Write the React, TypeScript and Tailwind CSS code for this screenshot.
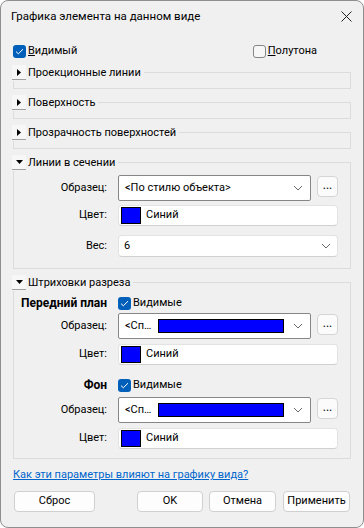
import React from "react";

const font = { fontFamily: 'Roboto, "Liberation Sans", Arial, sans-serif' };

function Check({ checked }: { checked: boolean }) {
  if (!checked) {
    return <span className="inline-block h-[13px] w-[13px] shrink-0 rounded-[3px] border border-[#858585] bg-[#f7f7f7]" />;
  }
  return (
    <span className="flex h-[13px] w-[13px] shrink-0 items-center justify-center rounded-[3px] bg-[#005fb8]">
      <svg width="9" height="7" viewBox="0 0 9 7" fill="none">
        <path d="M1 3.6 3.3 5.8 8 1.2" stroke="white" strokeWidth="1" />
      </svg>
    </span>
  );
}

function Toggle({ open }: { open: boolean }) {
  return (
    <span className="flex h-[15px] w-[14px] shrink-0 items-center justify-center border-b border-[#a0a0a0] bg-[#f7f7f7]">
      {open ? (
        <svg width="7" height="4" viewBox="0 0 7 4">
          <path d="M0 0h7L3.5 4z" fill="#000" />
        </svg>
      ) : (
        <svg width="4" height="7" viewBox="0 0 4 7">
          <path d="M0 0l4 3.5L0 7z" fill="#000" />
        </svg>
      )}
    </span>
  );
}

function Group({
  title,
  open,
  className,
  children,
}: {
  title: string;
  open?: boolean;
  className?: string;
  children?: React.ReactNode;
}) {
  return (
    <div className={`mx-[12px] border border-[#dcdcdc] ${className ?? ""}`}>
      <div className="-ml-[2px] -mt-[9px] flex h-[17px] w-fit items-center bg-[#f0f0f0] pr-[3px]">
        <Toggle open={!!open} />
        <span className="ml-[2px] leading-[15px]">{title}</span>
      </div>
      {children}
    </div>
  );
}

function Chevron() {
  return (
    <svg width="10" height="6" viewBox="0 0 10 6" fill="none" className="shrink-0">
      <path d="M1 1l4 4 4-4" stroke="#6b6b6b" strokeWidth="1" />
    </svg>
  );
}

function Dots() {
  return (
    <button className="ml-[6px] mt-[1px] flex h-[21px] w-[21px] shrink-0 items-center justify-center self-start rounded-[4px] border border-[#d5d5d5] bg-[#fbfbfb] pb-[4px] text-[12px] leading-none">
      ...
    </button>
  );
}

function Row({ label, bold, className, children }: { label: string; bold?: boolean; className?: string; children: React.ReactNode }) {
  return (
    <div className={`flex items-center ${className ?? ""}`}>
      <span className={`w-[93px] shrink-0 text-right ${bold ? "text-[12px] font-bold" : ""}`}>{label}</span>
      <div className="ml-[11px] mr-[12px] flex flex-1 items-center">{children}</div>
    </div>
  );
}

function ColorField() {
  return (
    <div className="flex h-[21px] flex-1 items-center rounded-[4px] border border-[#e3e3e3] border-b-[#d0d0d0] bg-white pl-[2px]">
      <span className="h-[17px] w-[20px] border border-black bg-[#0000ff]" />
      <span className="ml-[5px]">Синий</span>
    </div>
  );
}

function PatternSelect({ swatch }: { swatch?: boolean }) {
  return (
    <>
      <div className="flex h-[26px] flex-1 items-center rounded-[2px] border border-[#868686] bg-white pl-[6px] pr-[7px]">
        {swatch ? (
          <>
            <span>&lt;Сп…</span>
            <span className="ml-[7px] mr-[9px] h-[14px] flex-1 border border-black bg-[#0000ff]" />
          </>
        ) : (
          <span className="flex-1">&lt;По стилю объекта&gt;</span>
        )}
        <Chevron />
      </div>
      <Dots />
    </>
  );
}

export default function App() {
  return (
    <div className="h-[528px] w-[364px] bg-white text-[11px] text-black" style={font}>
      <div className="flex h-full flex-col overflow-hidden rounded-[8px] border border-[#8f8f8f] bg-[#f0f0f0]">
        <div className="flex h-[31px] shrink-0 items-center justify-between pl-[10px] pr-[11px]">
          <span className="text-[11.5px]">Графика элемента на данном виде</span>
          <svg width="11" height="11" viewBox="0 0 11 11" fill="none">
            <path d="M0.5 0.5l10 10M10.5 0.5l-10 10" stroke="#222" strokeWidth="1" />
          </svg>
        </div>

        <div className="mt-[12px] flex h-[14px] items-center justify-between pl-[12px] pr-[46px]">
          <label className="flex items-center gap-[2px]">
            <Check checked />
            <span>
              <span className="underline">В</span>идимый
            </span>
          </label>
          <label className="flex items-center gap-[2px]">
            <Check checked={false} />
            <span>
              <span className="underline">П</span>олутона
            </span>
          </label>
        </div>

        <Group title="Проекционные линии" className="mt-[14px] h-[17px]" />
        <Group title="Поверхность" className="mt-[13px] h-[17px]" />
        <Group title="Прозрачность поверхностей" className="mt-[13px] h-[17px]" />

        <Group title="Линии в сечении" open className="mt-[13px] h-[107px]">
          <Row label="Образец:" className="mt-[4px]">
            <PatternSelect />
          </Row>
          <Row label="Цвет:" className="mt-[4px]">
            <ColorField />
          </Row>
          <Row label="Вес:" className="mt-[9px]">
            <div className="flex h-[22px] flex-1 items-center rounded-[4px] border border-[#e3e3e3] border-b-[#d0d0d0] bg-white pl-[5px] pr-[6px]">
              <span className="flex-1">6</span>
              <Chevron />
            </div>
          </Row>
        </Group>

        <Group title="Штриховки разреза" open className="mt-[13px] h-[177px]">
          <Row label="Передний план" bold className="mt-[5px] h-[14px]">
            <label className="flex items-center gap-[2px]">
              <Check checked />
              <span>Видимые</span>
            </label>
          </Row>
          <Row label="Образец:" className="mt-[3px]">
            <PatternSelect swatch />
          </Row>
          <Row label="Цвет:" className="mt-[5px]">
            <ColorField />
          </Row>
          <Row label="Фон" bold className="mt-[13px] h-[14px]">
            <label className="flex items-center gap-[2px]">
              <Check checked />
              <span>Видимые</span>
            </label>
          </Row>
          <Row label="Образец:" className="mt-[5px]">
            <PatternSelect swatch />
          </Row>
          <Row label="Цвет:" className="mt-[5px]">
            <ColorField />
          </Row>
        </Group>

        <a href="#" className="ml-[12px] mt-[8px] h-[16px] w-fit leading-[16px] text-[#0066cc] underline">
          Как эти параметры влияют на графику вида?
        </a>

        <div className="mt-[8px] flex h-[21px] pl-[13px] pr-[13px]">
          <button className="h-[21px] w-[81px] rounded-[4px] border border-[#d0d0d0] bg-[#fdfdfd]">Сброс</button>
          <div className="flex-1" />
          <button className="h-[21px] w-[66px] rounded-[4px] border border-[#d0d0d0] bg-[#fdfdfd]">OK</button>
          <button className="ml-[6px] h-[21px] w-[67px] rounded-[4px] border border-[#d0d0d0] bg-[#fdfdfd]">Отмена</button>
          <button className="ml-[7px] h-[21px] w-[67px] rounded-[4px] border border-[#d0d0d0] bg-[#fdfdfd]">Применить</button>
        </div>
      </div>
    </div>
  );
}
